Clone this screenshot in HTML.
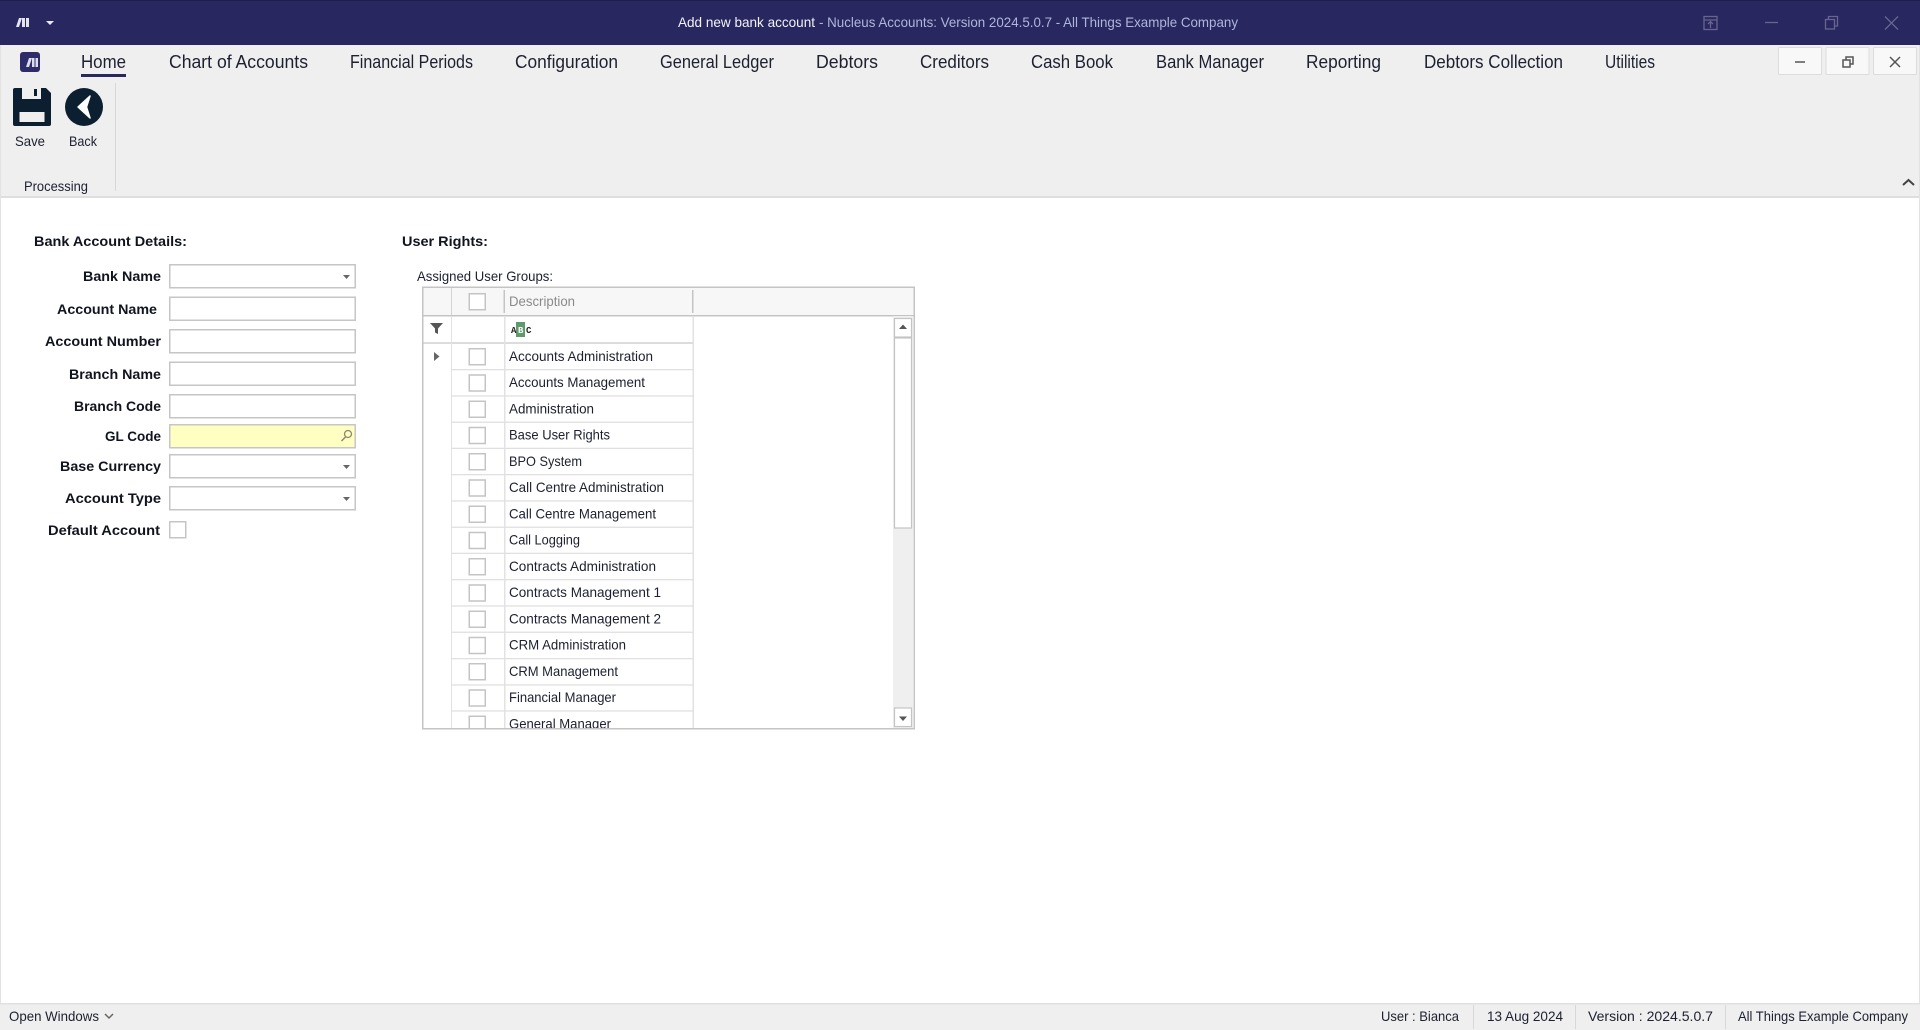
<!DOCTYPE html>
<html lang="en">
<head>
<meta charset="utf-8">
<title>Add new bank account - Nucleus Accounts</title>
<style>
html,body{margin:0;padding:0;background:#fff;overflow:hidden;width:1920px;height:1030px}
svg{display:block;filter:blur(0.35px)}
text{font-family:"Liberation Sans",Arial,sans-serif;fill:#1c2030}
.t{font-size:18px}
.s{font-size:14px}
.b{font-size:14px;font-weight:bold;fill:#10141f}
</style>
</head>
<body>
<svg xmlns="http://www.w3.org/2000/svg" width="1920" height="1030" viewBox="0 0 1920 1030">
<rect width="1920" height="1030" fill="#fff"/>
<rect x="0" y="45" width="1920" height="151" fill="#efefef"/>
<rect x="0" y="196" width="1920" height="2" fill="#dedede"/>
<rect x="0" y="45" width="1" height="985" fill="#e2e2e2"/>
<rect x="1919" y="45" width="1" height="985" fill="#e2e2e2"/>

<!-- title bar -->
<rect width="1920" height="45" fill="#29275f"/>
<rect width="1920" height="1" fill="#1f1d50"/>
<path d="M16 27l3-9h3l-3 9z M22 18h3v9h-3z M26 18h3v9h-3z" fill="#e4e4ee"/>
<path d="M46 21h8l-4 4z" fill="#e8e8f0"/>
<text x="678" y="27" class="s" style="fill:#f2f2f8" textLength="137" lengthAdjust="spacingAndGlyphs">Add new bank account</text>
<text x="819" y="27" class="s" style="fill:#aeb6dc" textLength="419" lengthAdjust="spacingAndGlyphs">- Nucleus Accounts: Version 2024.5.0.7 - All Things Example Company</text>
<g fill="none" stroke="#65658f" stroke-width="1.3">
<rect x="1704" y="16.5" width="13" height="13"/>
<path d="M1704 20h13M1710.5 28v-6M1708 24l2.500-2.500 2.500 2.500"/>
<path d="M1765 22.500h13"/>
<rect x="1825.500" y="19.500" width="9" height="9.500"/>
<path d="M1828.500 19.500v-3h9v9.500h-3"/>
<path d="M1885 16.500l13 13M1898 16.500l-13 13"/>
</g>

<!-- app logo -->
<rect x="20" y="52" width="20" height="20" rx="3" fill="#2e2b6b"/>
<path d="M26 67l3-9h3l-3 9z M32 58h2.500v9H32z M35.500 58H38v9h-2.500z" fill="#dcdcec"/>

<!-- tabs -->
<text x="81" y="68" class="t" textLength="45" lengthAdjust="spacingAndGlyphs">Home</text>
<rect x="81" y="74" width="45" height="3" fill="#29275f"/>
<text x="169" y="68" class="t" textLength="139" lengthAdjust="spacingAndGlyphs">Chart of Accounts</text>
<text x="350" y="68" class="t" textLength="123" lengthAdjust="spacingAndGlyphs">Financial Periods</text>
<text x="515" y="68" class="t" textLength="103" lengthAdjust="spacingAndGlyphs">Configuration</text>
<text x="660" y="68" class="t" textLength="114" lengthAdjust="spacingAndGlyphs">General Ledger</text>
<text x="816" y="68" class="t" textLength="62" lengthAdjust="spacingAndGlyphs">Debtors</text>
<text x="920" y="68" class="t" textLength="69" lengthAdjust="spacingAndGlyphs">Creditors</text>
<text x="1031" y="68" class="t" textLength="82" lengthAdjust="spacingAndGlyphs">Cash Book</text>
<text x="1156" y="68" class="t" textLength="108" lengthAdjust="spacingAndGlyphs">Bank Manager</text>
<text x="1306" y="68" class="t" textLength="75" lengthAdjust="spacingAndGlyphs">Reporting</text>
<text x="1424" y="68" class="t" textLength="139" lengthAdjust="spacingAndGlyphs">Debtors Collection</text>
<text x="1605" y="68" class="t" textLength="50" lengthAdjust="spacingAndGlyphs">Utilities</text>

<!-- mdi buttons -->
<g fill="#f8f8f8" stroke="#dcdcdc">
<rect x="1778.500" y="47.500" width="43" height="27" rx="1"/>
<rect x="1826" y="47.500" width="43" height="27" rx="1"/>
<rect x="1873.500" y="47.500" width="43" height="27" rx="1"/>
</g>
<g fill="none" stroke="#555" stroke-width="1.500">
<path d="M1795 62h10"/>
<rect x="1843" y="60" width="7" height="7"/>
<path d="M1846 60v-3h7v7h-3"/>
<path d="M1890 57l10 10M1900 57l-10 10"/>
</g>

<!-- ribbon -->
<path fill-rule="evenodd" fill="#0c1f30" d="M15 88h7v11h19v-11h5l5 5v31a2 2 0 0 1-2 2H15a2 2 0 0 1-2-2V90a2 2 0 0 1 2-2z M19.500 112v10h25v-10z"/>
<rect x="34" y="89" width="3" height="7" fill="#0c1f30"/>
<circle cx="84" cy="107" r="19" fill="#0c1f30"/>
<path d="M90 96l-12 11 12 11-3.500-11z" fill="#fff" stroke="#fff" stroke-width="1.500" stroke-linejoin="round"/>
<text x="15" y="146" class="s" textLength="30" lengthAdjust="spacingAndGlyphs">Save</text>
<text x="69" y="146" class="s" textLength="28" lengthAdjust="spacingAndGlyphs">Back</text>
<text x="24" y="191" class="s" textLength="64" lengthAdjust="spacingAndGlyphs">Processing</text>
<rect x="115" y="83" width="1" height="108" fill="#d8d8d8"/>
<path d="M1903 185l5.500-5 5.500 5" fill="none" stroke="#444" stroke-width="2"/>

<!-- form -->
<text x="34" y="246" class="b" textLength="153" lengthAdjust="spacingAndGlyphs">Bank Account Details:</text>
<text x="83" y="281" class="b" textLength="78" lengthAdjust="spacingAndGlyphs">Bank Name</text>
<text x="57" y="314" class="b" textLength="100" lengthAdjust="spacingAndGlyphs">Account Name</text>
<text x="45" y="346" class="b" textLength="116" lengthAdjust="spacingAndGlyphs">Account Number</text>
<text x="69" y="379" class="b" textLength="92" lengthAdjust="spacingAndGlyphs">Branch Name</text>
<text x="74" y="411" class="b" textLength="87" lengthAdjust="spacingAndGlyphs">Branch Code</text>
<text x="105" y="441" class="b" textLength="56" lengthAdjust="spacingAndGlyphs">GL Code</text>
<text x="60" y="471" class="b" textLength="101" lengthAdjust="spacingAndGlyphs">Base Currency</text>
<text x="65" y="503" class="b" textLength="96" lengthAdjust="spacingAndGlyphs">Account Type</text>
<text x="48" y="535" class="b" textLength="112" lengthAdjust="spacingAndGlyphs">Default Account</text>
<g fill="#fff" stroke="#c6c6c6" stroke-width="1.500">
<rect x="169.750" y="264.750" width="185.500" height="23"/>
<rect x="169.750" y="297.250" width="185.500" height="23"/>
<rect x="169.750" y="329.750" width="185.500" height="23"/>
<rect x="169.750" y="362.250" width="185.500" height="23"/>
<rect x="169.750" y="394.750" width="185.500" height="23"/>
<rect x="169.750" y="424.750" width="185.500" height="23" fill="#ffffc2"/>
<rect x="169.750" y="454.750" width="185.500" height="23"/>
<rect x="169.750" y="486.750" width="185.500" height="23"/>
<rect x="169.750" y="521.750" width="16" height="16"/>
</g>
<g fill="#666">
<path d="M343 275h7l-3.500 4z"/>
<path d="M343 465h7l-3.500 4z"/>
<path d="M343 497h7l-3.500 4z"/>
</g>
<circle cx="348" cy="434" r="3.500" fill="none" stroke="#8a8a70" stroke-width="1.300"/>
<path d="M345.500 437l-4 4" stroke="#8a8a70" stroke-width="1.500"/>

<!-- user rights -->
<text x="402" y="246" class="b" textLength="86" lengthAdjust="spacingAndGlyphs">User Rights:</text>
<text x="417" y="281" class="s" textLength="136" lengthAdjust="spacingAndGlyphs">Assigned User Groups:</text>

<!-- grid -->
<rect x="423" y="288" width="491" height="27" fill="#f7f7f7"/>
<rect x="422" y="315" width="493" height="1.500" fill="#c4c4c4"/>
<rect x="423" y="342" width="271" height="2" fill="#dcdcdc"/>
<rect x="451" y="288" width="1" height="27" fill="#d4d4d4"/>
<rect x="451" y="316" width="1" height="413" fill="#e2e2e2"/>
<rect x="504" y="316" width="1.500" height="413" fill="#e2e2e2"/>
<rect x="692.500" y="316" width="1.500" height="413" fill="#e2e2e2"/>
<rect x="503.500" y="290" width="1.500" height="23" fill="#c4c4c4"/>
<rect x="692" y="290" width="1.500" height="23" fill="#c4c4c4"/>
<text x="509" y="306" class="s" style="fill:#8a8a8a" textLength="66" lengthAdjust="spacingAndGlyphs">Description</text>
<path d="M430 323h13l-5 5.500v5.500l-3-1.500v-4z" fill="#555"/>
<rect x="516" y="322" width="9" height="15" fill="#5f9a6c"/>
<text x="511" y="333" style="font-size:9px;font-weight:bold;font-family:'Liberation Mono',monospace;fill:#222">A</text>
<text x="518" y="333" style="font-size:9px;font-weight:bold;font-family:'Liberation Mono',monospace;fill:#fff">B</text>
<text x="526" y="333" style="font-size:9px;font-weight:bold;font-family:'Liberation Mono',monospace;fill:#222">C</text>
<path d="M434 352l5.500 4.500-5.500 4.500z" fill="#666"/>

<g fill="#e0e0e0">
<rect x="451" y="369" width="243" height="1.300"/>
<rect x="451" y="395.300" width="243" height="1.300"/>
<rect x="451" y="421.600" width="243" height="1.300"/>
<rect x="451" y="447.700" width="243" height="1.300"/>
<rect x="451" y="474" width="243" height="1.300"/>
<rect x="451" y="500.300" width="243" height="1.300"/>
<rect x="451" y="526.600" width="243" height="1.300"/>
<rect x="451" y="552.700" width="243" height="1.300"/>
<rect x="451" y="579" width="243" height="1.300"/>
<rect x="451" y="605.300" width="243" height="1.300"/>
<rect x="451" y="631.600" width="243" height="1.300"/>
<rect x="451" y="658" width="243" height="1.300"/>
<rect x="451" y="684.300" width="243" height="1.300"/>
<rect x="451" y="710.300" width="243" height="1.300"/>
</g>
<g fill="#fff" stroke="#c4c4c4" stroke-width="1.500">
<rect x="469.250" y="293.750" width="16" height="16"/>
<rect x="469.250" y="348.750" width="16" height="16"/>
<rect x="469.250" y="375" width="16" height="16"/>
<rect x="469.250" y="401.250" width="16" height="16"/>
<rect x="469.250" y="427.500" width="16" height="16"/>
<rect x="469.250" y="453.750" width="16" height="16"/>
<rect x="469.250" y="480" width="16" height="16"/>
<rect x="469.250" y="506.250" width="16" height="16"/>
<rect x="469.250" y="532.500" width="16" height="16"/>
<rect x="469.250" y="558.750" width="16" height="16"/>
<rect x="469.250" y="585" width="16" height="16"/>
<rect x="469.250" y="611.250" width="16" height="16"/>
<rect x="469.250" y="637.500" width="16" height="16"/>
<rect x="469.250" y="663.750" width="16" height="16"/>
<rect x="469.250" y="690" width="16" height="16"/>
<rect x="469.250" y="716.250" width="16" height="16"/>
</g>
<text x="509" y="361" class="s" textLength="144" lengthAdjust="spacingAndGlyphs">Accounts Administration</text>
<text x="509" y="387.200" class="s" textLength="136" lengthAdjust="spacingAndGlyphs">Accounts Management</text>
<text x="509" y="413.500" class="s" textLength="85" lengthAdjust="spacingAndGlyphs">Administration</text>
<text x="509" y="439.700" class="s" textLength="101" lengthAdjust="spacingAndGlyphs">Base User Rights</text>
<text x="509" y="466" class="s" textLength="73" lengthAdjust="spacingAndGlyphs">BPO System</text>
<text x="509" y="492.200" class="s" textLength="155" lengthAdjust="spacingAndGlyphs">Call Centre Administration</text>
<text x="509" y="518.400" class="s" textLength="147" lengthAdjust="spacingAndGlyphs">Call Centre Management</text>
<text x="509" y="544.700" class="s" textLength="71" lengthAdjust="spacingAndGlyphs">Call Logging</text>
<text x="509" y="570.900" class="s" textLength="147" lengthAdjust="spacingAndGlyphs">Contracts Administration</text>
<text x="509" y="597.200" class="s" textLength="152" lengthAdjust="spacingAndGlyphs">Contracts Management 1</text>
<text x="509" y="623.400" class="s" textLength="152" lengthAdjust="spacingAndGlyphs">Contracts Management 2</text>
<text x="509" y="649.600" class="s" textLength="117" lengthAdjust="spacingAndGlyphs">CRM Administration</text>
<text x="509" y="675.900" class="s" textLength="109" lengthAdjust="spacingAndGlyphs">CRM Management</text>
<text x="509" y="702.100" class="s" textLength="107" lengthAdjust="spacingAndGlyphs">Financial Manager</text>
<text x="509" y="728.400" class="s" textLength="102" lengthAdjust="spacingAndGlyphs">General Manager</text>
<rect x="421" y="729" width="496" height="12" fill="#fff"/>

<!-- scrollbar -->
<rect x="893" y="316" width="20" height="412" fill="#efefef"/>
<g fill="#fff" stroke="#c4c4c4" stroke-width="1.200">
<rect x="894.500" y="318.500" width="17" height="18.500"/>
<rect x="894.500" y="338" width="17" height="190"/>
<rect x="894.500" y="708" width="17" height="18.500"/>
</g>
<path d="M899 329h8l-4-4.500z" fill="#555"/>
<path d="M899 716.500h8l-4 4.500z" fill="#555"/>
<rect x="422.750" y="287.250" width="491.500" height="441.500" fill="none" stroke="#c4c4c4" stroke-width="1.500"/>

<!-- status bar -->
<rect x="0" y="1003" width="1920" height="27" fill="#efefef"/>
<rect x="0" y="1003" width="1920" height="1.500" fill="#e0e0e0"/>
<text x="9" y="1021" class="s" textLength="90" lengthAdjust="spacingAndGlyphs">Open Windows</text>
<path d="M105 1014l4 4 4-4" fill="none" stroke="#666" stroke-width="1.500"/>
<text x="1381" y="1021" class="s" textLength="78" lengthAdjust="spacingAndGlyphs">User : Bianca</text>
<text x="1487" y="1021" class="s" textLength="76" lengthAdjust="spacingAndGlyphs">13 Aug 2024</text>
<text x="1588" y="1021" class="s" textLength="125" lengthAdjust="spacingAndGlyphs">Version : 2024.5.0.7</text>
<text x="1738" y="1021" class="s" textLength="170" lengthAdjust="spacingAndGlyphs">All Things Example Company</text>
<g fill="#d8d8d8">
<rect x="1473" y="1005" width="1" height="24"/>
<rect x="1575" y="1005" width="1" height="24"/>
<rect x="1725" y="1005" width="1" height="24"/>
</g>
</svg>
</body>
</html>
